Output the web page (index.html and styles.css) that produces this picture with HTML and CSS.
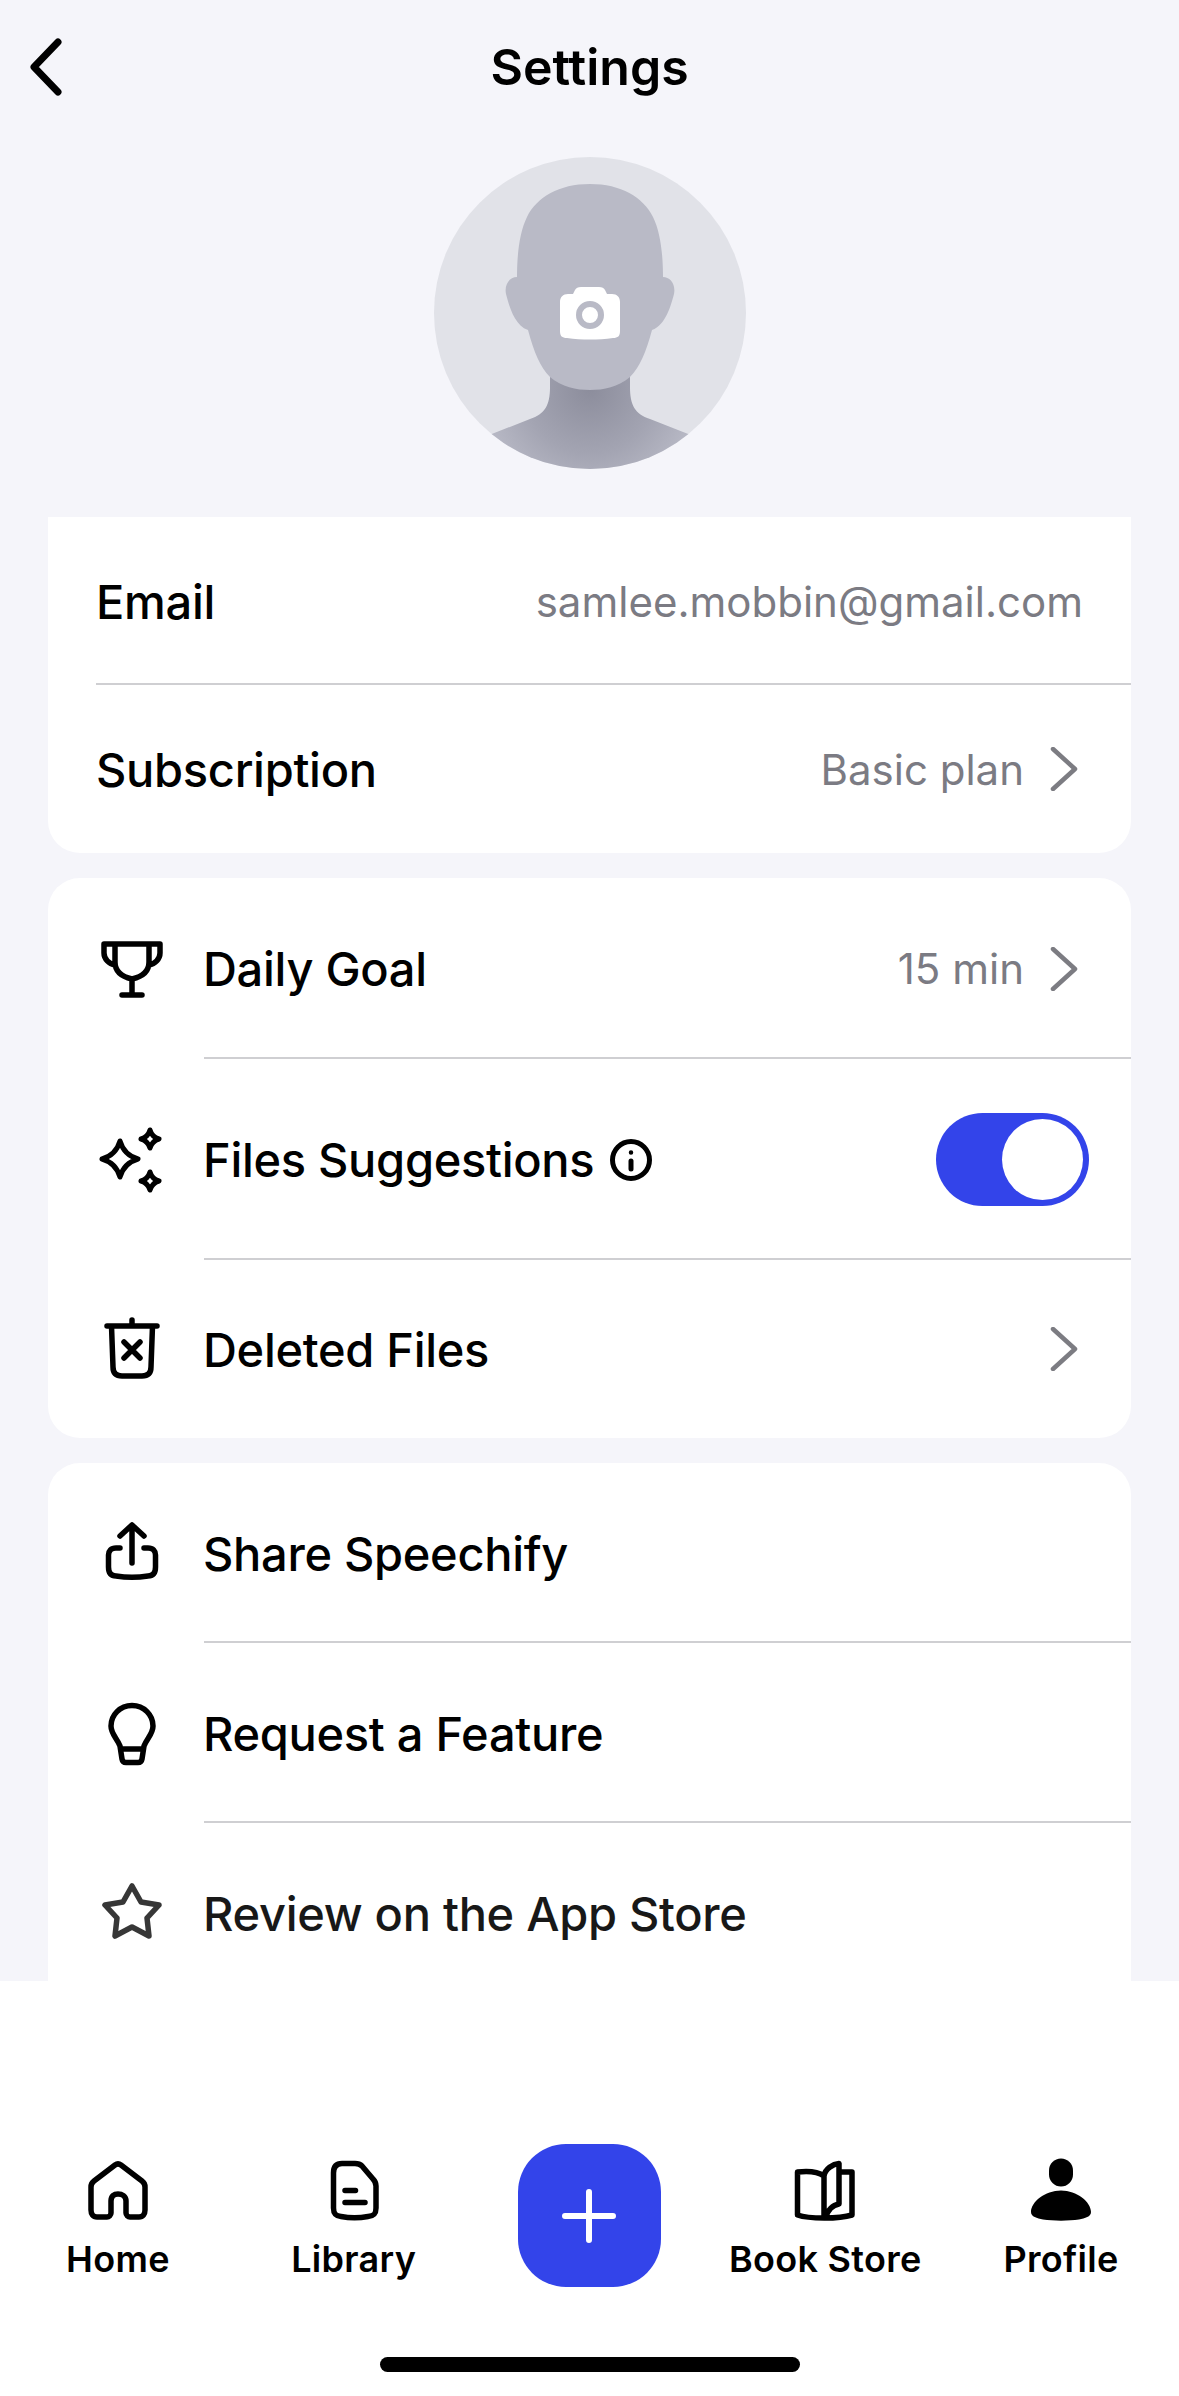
FILE: index.html
```html
<!DOCTYPE html>
<html>

<head>
    <title>Settings</title>
    <meta charset="utf-8">
    <link rel="stylesheet" href="styles.css">
</head>

<body>
    <div class="main">
        <div class="header">
            <svg class="back" viewBox="0 0 40 60" fill="none" stroke="#000" stroke-width="7" stroke-linecap="round" stroke-linejoin="round"><path d="M32 5L8 30L32 55"/></svg>
            <div class="title">Settings</div>
        </div>

        <div class="avatar">
            <svg viewBox="0 0 312 312" width="312" height="312">
                <defs>
                    <clipPath id="circle"><circle cx="156" cy="156" r="156"/></clipPath>
                    <radialGradient id="neck" gradientUnits="userSpaceOnUse" cx="156" cy="232" r="118">
                        <stop offset="0" stop-color="#8c8d9c"/>
                        <stop offset="0.55" stop-color="#a3a4b2"/>
                        <stop offset="1" stop-color="#bcbdc9"/>
                    </radialGradient>
                </defs>
                <circle cx="156" cy="156" r="156" fill="#e1e2e8"/>
                <g clip-path="url(#circle)">
                    <path fill="url(#neck)" d="M116 210V230C116 248 111 257 96 262L40 284V312H272V284L216 262C201 257 196 248 196 230V210Z"/>
                </g>
                <path fill="#b9bac6" d="M156 27C125 27 103 40 93 60C85 76 83 100 83 120C76 120 70 127 72 137C75 148 80 168 94 173C100 195 106 210 116 220C128 230 142 233 156 233C170 233 184 230 196 220C206 210 212 195 218 173C232 168 237 148 240 137C242 127 236 120 229 120C229 100 227 76 219 60C209 40 187 27 156 27Z"/>
                <path fill="#fff" d="M134 137H139L141 133C142 131 144 130 147 130H165C168 130 170 131 171 133L173 137H178C183 137 186 140 186 145V174C186 179 184 181 179 181C164 183 148 183 133 181C128 181 126 179 126 174V145C126 140 129 137 134 137Z"/>
                <circle cx="156" cy="158" r="11" fill="none" stroke="#b9bac6" stroke-width="6"/>
            </svg>
        </div>

        <div class="card card-first">
            <div class="row row-plain">
                <span class="label">Email</span>
                <span class="value value-email">samlee.mobbin@gmail.com</span>
            </div>
            <div class="row row-plain">
                <span class="label">Subscription</span>
                <span class="value">Basic plan</span>
                <svg class="chevron" viewBox="0 0 28 44" fill="none" stroke="#7c7c82" stroke-width="4.5" stroke-linecap="round" stroke-linejoin="round"><path d="M3 2L25 22L3 42"/></svg>
            </div>
        </div>

        <div class="card">
            <div class="row row-goal">
                <svg class="icon" viewBox="0 0 72 72" fill="none" stroke="#000" stroke-width="5.5" stroke-linecap="round" stroke-linejoin="round"><path d="M8 11H64M19 11V29C19 39 27 44 36 46C45 44 53 39 53 29V11M8 11V20C8 26 13 31 19 32M64 11V20C64 26 59 31 53 32M36 46V62M26 62H46"/></svg>
                <span class="label">Daily Goal</span>
                <span class="value">15 min</span>
                <svg class="chevron" viewBox="0 0 28 44" fill="none" stroke="#7c7c82" stroke-width="4.5" stroke-linecap="round" stroke-linejoin="round"><path d="M3 2L25 22L3 42"/></svg>
            </div>
            <div class="row row-suggest">
                <svg class="icon" viewBox="0 0 72 72" fill="none" stroke="#000" stroke-width="5" stroke-linecap="round" stroke-linejoin="round"><path d="M24 17Q28 31 42 35Q28 39 24 53Q20 39 6 35Q20 31 24 17ZM54 6Q56 13 63 15Q56 17 54 24Q52 17 45 15Q52 13 54 6ZM54 48Q56 55 63 57Q56 59 54 66Q52 59 45 57Q52 55 54 48Z"/></svg>
                <span class="label">Files Suggestions</span>
                <svg class="info" viewBox="0 0 42 42" fill="none" stroke="#000" stroke-width="5" stroke-linecap="round"><circle cx="21" cy="21" r="18.5"/><path d="M21 22V30"/><circle cx="21" cy="13.5" r="1" fill="#000" stroke-width="2.5"/></svg>
                <div class="toggle"><div class="knob"></div></div>
            </div>
            <div class="row row-deleted">
                <svg class="icon" viewBox="0 0 72 72" fill="none" stroke="#000" stroke-width="5.5" stroke-linecap="round" stroke-linejoin="round"><path d="M11 13H61M36 7V13M15.5 13L17 54C17 60 20 63 26 63H46C52 63 55 60 55 54L56.5 13M28 29L44 45M44 29L28 45"/></svg>
                <span class="label">Deleted Files</span>
                <svg class="chevron" viewBox="0 0 28 44" fill="none" stroke="#7c7c82" stroke-width="4.5" stroke-linecap="round" stroke-linejoin="round"><path d="M3 2L25 22L3 42"/></svg>
            </div>
        </div>

        <div class="card card-last">
            <div class="row row-action">
                <svg class="icon" viewBox="0 0 72 72" fill="none" stroke="#000" stroke-width="5.5" stroke-linecap="round" stroke-linejoin="round"><path d="M36 8V46M24 19L36 8L48 19M24 31H20C15 31 12.5 34 12.5 38V50C12.5 56 15 59 20 59C30 60.5 42 60.5 52 59C57 59 59.5 56 59.5 50V38C59.5 34 57 31 52 31H48"/></svg>
                <span class="label">Share Speechify</span>
            </div>
            <div class="row row-action">
                <svg class="icon" viewBox="0 0 72 72" fill="none" stroke="#000" stroke-width="5.5" stroke-linecap="round" stroke-linejoin="round"><path d="M36 8.5C24 8.5 15 18 15 29C15 37 21 41 24 49L26 62C26.5 65 28 65.5 30 65.5H42C44 65.5 45.5 65 46 62L48 49C51 41 57 37 57 29C57 18 48 8.5 36 8.5ZM24.5 52H47.5"/></svg>
                <span class="label">Request a Feature</span>
            </div>
            <div class="row row-action row-fade">
                <svg class="icon" viewBox="0 0 72 72" fill="none" stroke="#222" stroke-width="5.5" stroke-linecap="round" stroke-linejoin="round"><path d="M36 9L45 25L63 28L51 41L53 59L36 50L19 59L21 41L9 28L27 25Z"/></svg>
                <span class="label">Review on the App Store</span>
            </div>
        </div>
    </div>

    <div class="nav">
        <div class="nav-items">
            <div class="nav-item">
                <svg class="nav-icon" viewBox="0 0 72 72" fill="none" stroke="#000" stroke-width="5.5" stroke-linejoin="round"><path d="M9 33C9 30 10 28.5 12 27L33 11C35 9.5 37 9.5 39 11L60 27C62 28.5 63 30 63 33V56C63 60 61 63 57 63H48C46 63 44 61 44 59V47C44 42 40 40 36 40C32 40 29 42 29 47V59C29 61 27 63 25 63H15C11 63 9 60 9 56Z"/></svg>
                <span class="nav-label">Home</span>
            </div>
            <div class="nav-item">
                <svg class="nav-icon" viewBox="0 0 72 72" fill="none" stroke="#000" stroke-width="5.5" stroke-linecap="round" stroke-linejoin="round"><path d="M15.5 19C15.5 13 18 9.5 24 9.5H37C40 9.5 42 10 44 12L55 25C57 27 58 29 58 32V54C58 60 56 62 50 62.5C42 64 31 64 23 62.5C18 62 15.5 60 15.5 54ZM27 36.5H37.5M27 48.5H47"/></svg>
                <span class="nav-label">Library</span>
            </div>
            <div class="nav-item">
                <div class="fab">
                    <svg viewBox="0 0 54 54" width="54" height="54" fill="none" stroke="#fff" stroke-width="6" stroke-linecap="round"><path d="M27 3V51M3 27H51"/></svg>
                </div>
            </div>
            <div class="nav-item">
                <svg class="nav-icon" viewBox="0 0 72 72" fill="none" stroke="#000" stroke-width="5.5" stroke-linecap="round" stroke-linejoin="round"><path d="M35 22C28 17 17 17 8.5 18V61C20 65 50 65 63 61V18H51M35 22V63M35 22C36 15 44 10 50 9.5V50C44 51 38 56 37 64"/></svg>
                <span class="nav-label">Book Store</span>
            </div>
            <div class="nav-item">
                <svg class="nav-icon" viewBox="0 0 72 72" fill="#000"><rect x="24" y="4.5" width="24" height="28" rx="12"/><path d="M36 36.5C20 36.5 6 48 6 58C6 63 12 64 18 65.5C28 67 44 67 54 65.5C60 64 66 63 66 58C66 48 52 36.5 36 36.5Z"/></svg>
                <span class="nav-label">Profile</span>
            </div>
        </div>
        <div class="home-bar"></div>
    </div>
</body>

</html>
```

FILE: styles.css
```css
* {
    box-sizing: border-box;
}

body {
    margin: 0;
    height: 2396px;
    overflow: hidden;
    background-color: #ffffff;
    font-family: "Inter", "Liberation Sans", sans-serif;
    color: #000000;
}

.main {
    height: 1981px;
    overflow: hidden;
    background-color: #f5f5fa;
    padding: 0 48px;
}

.header {
    height: 157px;
    display: flex;
    align-items: flex-start;
    justify-content: center;
    padding-top: 36px;
    position: relative;
}

.back {
    position: absolute;
    left: -22px;
    top: 37px;
    width: 40px;
    height: 60px;
}

.title {
    font-size: 50px;
    line-height: 62px;
    font-weight: 600;
}

.avatar {
    height: 360px;
    display: flex;
    justify-content: center;
    align-items: flex-start;
}

.card {
    background-color: #ffffff;
    border-radius: 32px;
    margin-bottom: 25px;
}

.card-first {
    border-radius: 0 0 32px 32px;
}

.card-last {
    border-radius: 32px 32px 0 0;
    margin-bottom: 0;
}

.row {
    display: flex;
    align-items: center;
    padding-left: 48px;
    position: relative;
}

.row::after {
    content: "";
    position: absolute;
    left: 156px;
    right: 0;
    bottom: 0;
    height: 2px;
    background-color: #cfcfd2;
}

.row:last-child::after {
    display: none;
}

.row-plain {
    height: 168px;
}

.row-plain::after {
    left: 48px;
}

.row-goal {
    height: 181px;
}

.row-suggest {
    height: 201px;
}

.row-deleted {
    height: 178px;
}

.row-action {
    height: 180px;
}

.row-fade {
    opacity: 0.9;
}

.icon {
    width: 72px;
    height: 72px;
    flex: none;
    margin-right: 35px;
}

.label {
    font-size: 47px;
    font-weight: 500;
    letter-spacing: -0.3px;
}

.value {
    margin-left: auto;
    font-size: 42px;
    color: #7b7b83;
}

.value-email {
    margin-right: 48px;
}

.chevron {
    width: 28px;
    height: 44px;
    flex: none;
    margin-left: 26px;
    margin-right: 53px;
}

.row-deleted .chevron {
    margin-left: auto;
}

.info {
    width: 42px;
    height: 42px;
    flex: none;
    margin-left: 16px;
}

.toggle {
    margin-left: auto;
    margin-right: 42px;
    width: 153px;
    height: 93px;
    border-radius: 47px;
    background-color: #3344ea;
    padding: 6px;
    display: flex;
    justify-content: flex-end;
}

.knob {
    width: 81px;
    height: 81px;
    border-radius: 50%;
    background-color: #ffffff;
}

.nav {
    height: 415px;
    background-color: #ffffff;
    padding-top: 173px;
    position: relative;
}

.nav-items {
    display: grid;
    grid-template-columns: repeat(5, 1fr);
}

.nav-item {
    display: flex;
    flex-direction: column;
    align-items: center;
}

.nav-icon {
    width: 72px;
    height: 72px;
}

.nav-label {
    font-size: 36px;
    line-height: 44px;
    font-weight: 600;
    letter-spacing: 0.3px;
    margin-top: 11px;
}

.fab {
    width: 143px;
    height: 143px;
    margin-top: -10px;
    border-radius: 48px;
    background-color: #3344ea;
    display: flex;
    align-items: center;
    justify-content: center;
}

.home-bar {
    position: absolute;
    left: 380px;
    top: 376px;
    width: 420px;
    height: 15px;
    border-radius: 8px;
    background-color: #000000;
}
```
